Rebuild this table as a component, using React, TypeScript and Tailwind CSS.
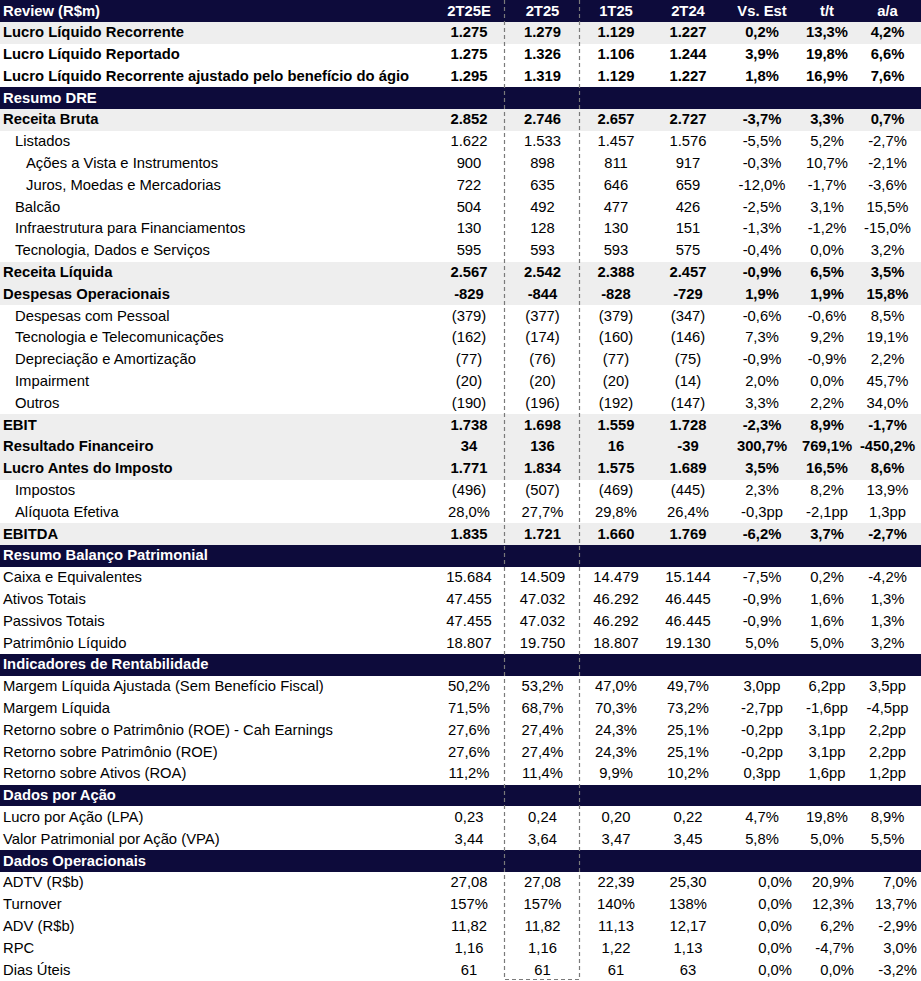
type Row = {
  label: string;
  values: string[];
  kind?: 'bold' | 'normal';
  shaded?: boolean;
  indent?: 0 | 1 | 2;
};

type Section = {
  title: string;
  rightAlign?: boolean;
  rows: Row[];
};

const columns = ['2T25E', '2T25', '1T25', '2T24', 'Vs. Est', 't/t', 'a/a'];

const sections: Section[] = [
  {
    title: 'Review (R$m)',
    rows: [
      { label: 'Lucro Líquido Recorrente', kind: 'bold', shaded: true, values: ['1.275', '1.279', '1.129', '1.227', '0,2%', '13,3%', '4,2%'] },
      { label: 'Lucro Líquido Reportado', kind: 'bold', values: ['1.275', '1.326', '1.106', '1.244', '3,9%', '19,8%', '6,6%'] },
      { label: 'Lucro Líquido Recorrente ajustado pelo benefício do ágio', kind: 'bold', values: ['1.295', '1.319', '1.129', '1.227', '1,8%', '16,9%', '7,6%'] },
    ],
  },
  {
    title: 'Resumo DRE',
    rows: [
      { label: 'Receita Bruta', kind: 'bold', shaded: true, values: ['2.852', '2.746', '2.657', '2.727', '-3,7%', '3,3%', '0,7%'] },
      { label: 'Listados', indent: 1, values: ['1.622', '1.533', '1.457', '1.576', '-5,5%', '5,2%', '-2,7%'] },
      { label: 'Ações a Vista e Instrumentos', indent: 2, values: ['900', '898', '811', '917', '-0,3%', '10,7%', '-2,1%'] },
      { label: 'Juros, Moedas e Mercadorias', indent: 2, values: ['722', '635', '646', '659', '-12,0%', '-1,7%', '-3,6%'] },
      { label: 'Balcão', indent: 1, values: ['504', '492', '477', '426', '-2,5%', '3,1%', '15,5%'] },
      { label: 'Infraestrutura para Financiamentos', indent: 1, values: ['130', '128', '130', '151', '-1,3%', '-1,2%', '-15,0%'] },
      { label: 'Tecnologia, Dados e Serviços', indent: 1, values: ['595', '593', '593', '575', '-0,4%', '0,0%', '3,2%'] },
      { label: 'Receita Líquida', kind: 'bold', shaded: true, values: ['2.567', '2.542', '2.388', '2.457', '-0,9%', '6,5%', '3,5%'] },
      { label: 'Despesas Operacionais', kind: 'bold', shaded: true, values: ['-829', '-844', '-828', '-729', '1,9%', '1,9%', '15,8%'] },
      { label: 'Despesas com Pessoal', indent: 1, values: ['(379)', '(377)', '(379)', '(347)', '-0,6%', '-0,6%', '8,5%'] },
      { label: 'Tecnologia e Telecomunicações', indent: 1, values: ['(162)', '(174)', '(160)', '(146)', '7,3%', '9,2%', '19,1%'] },
      { label: 'Depreciação e Amortização', indent: 1, values: ['(77)', '(76)', '(77)', '(75)', '-0,9%', '-0,9%', '2,2%'] },
      { label: 'Impairment', indent: 1, values: ['(20)', '(20)', '(20)', '(14)', '2,0%', '0,0%', '45,7%'] },
      { label: 'Outros', indent: 1, values: ['(190)', '(196)', '(192)', '(147)', '3,3%', '2,2%', '34,0%'] },
      { label: 'EBIT', kind: 'bold', shaded: true, values: ['1.738', '1.698', '1.559', '1.728', '-2,3%', '8,9%', '-1,7%'] },
      { label: 'Resultado Financeiro', kind: 'bold', shaded: true, values: ['34', '136', '16', '-39', '300,7%', '769,1%', '-450,2%'] },
      { label: 'Lucro Antes do Imposto', kind: 'bold', shaded: true, values: ['1.771', '1.834', '1.575', '1.689', '3,5%', '16,5%', '8,6%'] },
      { label: 'Impostos', indent: 1, values: ['(496)', '(507)', '(469)', '(445)', '2,3%', '8,2%', '13,9%'] },
      { label: 'Alíquota Efetiva', indent: 1, values: ['28,0%', '27,7%', '29,8%', '26,4%', '-0,3pp', '-2,1pp', '1,3pp'] },
      { label: 'EBITDA', kind: 'bold', shaded: true, values: ['1.835', '1.721', '1.660', '1.769', '-6,2%', '3,7%', '-2,7%'] },
    ],
  },
  {
    title: 'Resumo Balanço Patrimonial',
    rows: [
      { label: 'Caixa e Equivalentes', values: ['15.684', '14.509', '14.479', '15.144', '-7,5%', '0,2%', '-4,2%'] },
      { label: 'Ativos Totais', values: ['47.455', '47.032', '46.292', '46.445', '-0,9%', '1,6%', '1,3%'] },
      { label: 'Passivos Totais', values: ['47.455', '47.032', '46.292', '46.445', '-0,9%', '1,6%', '1,3%'] },
      { label: 'Patrimônio Líquido', values: ['18.807', '19.750', '18.807', '19.130', '5,0%', '5,0%', '3,2%'] },
    ],
  },
  {
    title: 'Indicadores de Rentabilidade',
    rows: [
      { label: 'Margem Líquida Ajustada (Sem Benefício Fiscal)', values: ['50,2%', '53,2%', '47,0%', '49,7%', '3,0pp', '6,2pp', '3,5pp'] },
      { label: 'Margem Líquida', values: ['71,5%', '68,7%', '70,3%', '73,2%', '-2,7pp', '-1,6pp', '-4,5pp'] },
      { label: 'Retorno sobre o Patrimônio (ROE) - Cah Earnings', values: ['27,6%', '27,4%', '24,3%', '25,1%', '-0,2pp', '3,1pp', '2,2pp'] },
      { label: 'Retorno sobre Patrimônio (ROE)', values: ['27,6%', '27,4%', '24,3%', '25,1%', '-0,2pp', '3,1pp', '2,2pp'] },
      { label: 'Retorno sobre Ativos (ROA)', values: ['11,2%', '11,4%', '9,9%', '10,2%', '0,3pp', '1,6pp', '1,2pp'] },
    ],
  },
  {
    title: 'Dados por Ação',
    rows: [
      { label: 'Lucro por Ação (LPA)', values: ['0,23', '0,24', '0,20', '0,22', '4,7%', '19,8%', '8,9%'] },
      { label: 'Valor Patrimonial por Ação (VPA)', values: ['3,44', '3,64', '3,47', '3,45', '5,8%', '5,0%', '5,5%'] },
    ],
  },
  {
    title: 'Dados Operacionais',
    rightAlign: true,
    rows: [
      { label: 'ADTV (R$b)', values: ['27,08', '27,08', '22,39', '25,30', '0,0%', '20,9%', '7,0%'] },
      { label: 'Turnover', values: ['157%', '157%', '140%', '138%', '0,0%', '12,3%', '13,7%'] },
      { label: 'ADV (R$b)', values: ['11,82', '11,82', '11,13', '12,17', '0,0%', '6,2%', '-2,9%'] },
      { label: 'RPC', values: ['1,16', '1,16', '1,22', '1,13', '0,0%', '-4,7%', '3,0%'] },
      { label: 'Dias Úteis', values: ['61', '61', '61', '63', '0,0%', '0,0%', '-3,2%'] },
    ],
  },
];

const grid = 'grid grid-cols-[433px_72px_75px_72px_72px_76px_54px_67px] h-[21.8px] items-center';
const rightPads = ['', '', '', '', 'pr-[8px]', 'pr-0', 'pr-[4px]'];
const indents = ['pl-[3px]', 'pl-[15px]', 'pl-[26px]'];

function SectionHeader({ title, first }: { title: string; first: boolean }) {
  return (
    <div className={`${grid} bg-[#0d0b3b] text-white font-bold`}>
      <div className="pl-[3px] whitespace-nowrap">{title}</div>
      {first &&
        columns.map((c) => (
          <div key={c} className="text-center whitespace-nowrap">
            {c}
          </div>
        ))}
    </div>
  );
}

function DataRow({ row, rightAlign }: { row: Row; rightAlign?: boolean }) {
  const bold = row.kind === 'bold';
  return (
    <div className={`${grid} ${row.shaded ? 'bg-[#eeeeee]' : 'bg-white'} ${bold ? 'font-bold' : ''} text-black`}>
      <div className={`${indents[row.indent ?? 0]} whitespace-nowrap`}>{row.label}</div>
      {row.values.map((v, i) => (
        <div
          key={i}
          className={`whitespace-nowrap ${rightAlign && i >= 4 ? `text-right ${rightPads[i]}` : 'text-center'}`}
        >
          {v}
        </div>
      ))}
    </div>
  );
}

export default function App() {
  return (
    <div className="w-[921px] h-[981px] bg-white overflow-hidden">
      <div className="relative font-['Liberation_Sans',Arial,sans-serif] text-[14.8px] leading-none">
        {sections.map((s, si) => (
          <div key={s.title}>
            <SectionHeader title={s.title} first={si === 0} />
            {s.rows.map((r) => (
              <DataRow key={r.label} row={r} rightAlign={s.rightAlign} />
            ))}
          </div>
        ))}

        {/* dashed highlight around the 2T25 column */}
        <svg className="absolute left-0 top-0 pointer-events-none" width="921" height="981">
          <path
            d="M504.5 0 V979.5 H579.5 V0"
            fill="none"
            stroke="#7a7a7a"
            strokeWidth="1.2"
            strokeDasharray="4 3"
          />
        </svg>
      </div>
    </div>
  );
}
